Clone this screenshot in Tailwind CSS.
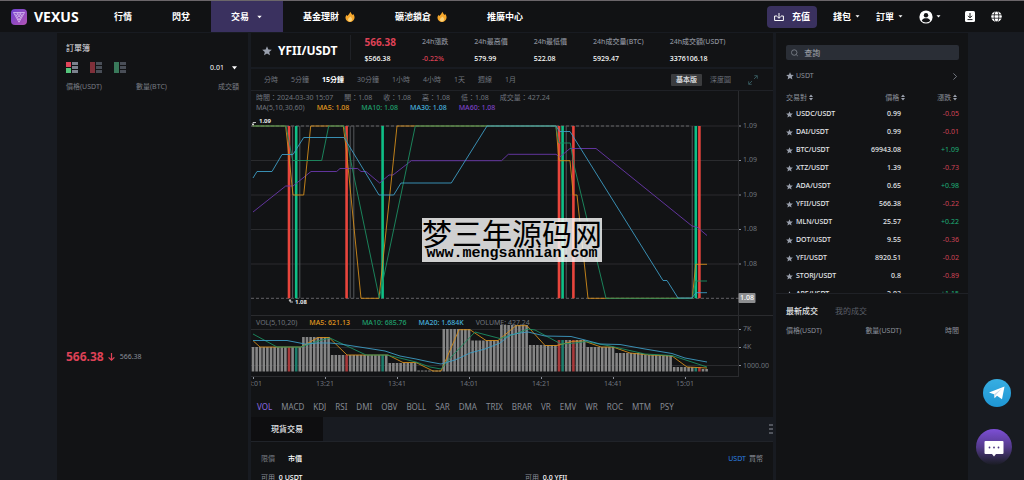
<!DOCTYPE html>
<html lang="zh-Hant">
<head>
  <meta charset="UTF-8">
  <meta name="viewport" content="width=device-width, initial-scale=1.0">
  <title>VEXUS - YFII/USDT</title>
  <script src="https://cdn.jsdelivr.net/npm/@tailwindcss/browser@4"></script>
</head>
<body class="flex h-screen flex-col overflow-hidden bg-[#181b21] font-['Noto_Sans','Noto_Sans_CJK_TC',sans-serif] text-[7px] leading-[10px] text-[#8a8f99]">

  <!-- Header -->
  <header class="flex h-8 shrink-0 items-stretch border-t border-[#6b666a] bg-[#111214] pl-[11px] text-[9px] font-bold text-white">
    <a href="#" class="flex w-[83px] items-center gap-[7px]">
      <svg class="size-4" viewBox="0 0 16 16">
        <defs>
          <linearGradient id="logoFill" x1="0" y1="0" x2="1" y2="1">
            <stop offset="0" stop-color="#6a3fd0"/>
            <stop offset="1" stop-color="#b455b4"/>
          </linearGradient>
        </defs>
        <rect width="16" height="16" rx="4" fill="url(#logoFill)"/>
        <path d="M2.500 3.500h3.200L8 8l2.300-4.500h3.200L8 13.200z M4.500 4.800L8 11l3.500-6.200 M5.800 3.500h4.400 M6.500 5h3" fill="none" stroke="#e6d4fa" stroke-width=".7"/>
      </svg>
      <span class="text-sm">VEXUS</span>
    </a>
    <nav class="flex items-stretch">
      <a href="#" class="flex items-center px-5">行情</a>
      <a href="#" class="flex items-center pr-[21px] pl-5">閃兌</a>
      <a href="#" class="flex items-center gap-[7px] bg-[#3a315f] px-5">交易
        <svg class="w-[7px]" viewBox="0 0 7 4"><path d="M1.300 .8h4.400L3.500 3.200z" fill="#fff"/></svg>
      </a>
      <a href="#" class="flex items-center gap-1.5 px-5">基金理財
        <svg class="w-2.5" viewBox="0 0 10 12"><path d="M5.600.8c.3 1.600 1 2 2 3.100l.6-.9C9.300 4.300 9.700 5.500 9.500 7 9.200 9.300 7.400 11 5 11S.6 9.300.5 7C.4 5.700 1 4.700 1.600 4l.8 1C3.600 3.900 4.300 2.700 5.600.8z" fill="#f6a72c"/><path d="M5.200 5.500C6.500 6.700 7.300 7.400 7 8.700 6.800 9.800 6 10.500 5 10.500S3.100 9.800 3 8.700c-.1-1.300 1.300-1.800 2.200-3.200z" fill="#fbd27a"/></svg>
      </a>
      <a href="#" class="flex items-center gap-1.5 px-5">礦池鎖倉
        <svg class="w-2.5" viewBox="0 0 10 12"><path d="M5.600.8c.3 1.600 1 2 2 3.100l.6-.9C9.300 4.300 9.700 5.500 9.500 7 9.200 9.300 7.400 11 5 11S.6 9.300.5 7C.4 5.700 1 4.700 1.600 4l.8 1C3.600 3.900 4.300 2.700 5.600.8z" fill="#f6a72c"/><path d="M5.200 5.500C6.500 6.700 7.300 7.400 7 8.700 6.800 9.800 6 10.500 5 10.500S3.100 9.800 3 8.700c-.1-1.300 1.300-1.800 2.200-3.200z" fill="#fbd27a"/></svg>
      </a>
      <a href="#" class="flex items-center px-5">推廣中心</a>
    </nav>
    <div class="ml-auto flex items-center pr-[22px]">
      <button class="mr-4 flex h-[22px] items-center gap-2 rounded-sm bg-[#3a315f] px-[7px]">
        <svg class="size-2.5" viewBox="0 0 10 10" fill="none" stroke="#fff"><path d="M3 4H.6v4.500h8.800V4H7M5 1v5M3.200 4.600L5 6.300l1.800-1.700"/></svg>
        <span>充值</span>
      </button>
      <a href="#" class="mr-4 flex items-center gap-1">錢包
        <svg class="w-[5px]" viewBox="0 0 5 3"><path d="M.5.300h4L2.500 2.600z" fill="#fff"/></svg>
      </a>
      <a href="#" class="mr-4 flex items-center gap-1">訂單
        <svg class="w-[5px]" viewBox="0 0 5 3"><path d="M.5.300h4L2.500 2.600z" fill="#fff"/></svg>
      </a>
      <button class="mr-6 flex items-center gap-[3px]" aria-label="帳戶">
        <svg class="size-3.5" viewBox="0 0 14 14"><circle cx="7" cy="7" r="6.600" fill="#fff"/><circle cx="7" cy="5.200" r="2.200" fill="#111214"/><path d="M2.800 10.800C3.500 8.900 5 8.300 7 8.300s3.500.6 4.200 2.500C10.200 12 8.700 12.500 7 12.500s-3.200-.5-4.200-1.700z" fill="#111214"/></svg>
        <svg class="w-[5px]" viewBox="0 0 5 3"><path d="M.5.300h4L2.500 2.600z" fill="#fff"/></svg>
      </button>
      <button class="mr-4" aria-label="下載">
        <svg class="h-[11px] w-2.5" viewBox="0 0 10 11"><rect width="10" height="11" rx="1.500" fill="#fff"/><path d="M5 2v4.600M3 4.800l2 2 2-2M2.500 8.600h5" fill="none" stroke="#111214"/></svg>
      </button>
      <button aria-label="語言">
        <svg class="size-[11px]" viewBox="0 0 11 11"><circle cx="5.500" cy="5.500" r="5.300" fill="#fff"/><g fill="none" stroke="#111214" stroke-width=".8"><ellipse cx="5.500" cy="5.500" rx="2.300" ry="5.300"/><path d="M0 3.800h11M0 7.200h11"/></g></svg>
      </button>
    </div>
  </header>

  <main class="flex min-h-0 flex-1 gap-[3px] pt-px pr-14 pl-[57px]">

    <!-- Order book -->
    <aside class="w-[191px] shrink-0 bg-[#121315] px-[9px] pt-2.5">
      <h2 class="text-[8px] text-[#e4e6ea]">訂單簿</h2>
      <div class="mt-[9px] flex items-center gap-3">
        <button aria-label="全部">
          <svg class="h-[11px] w-3" viewBox="0 0 12 11"><path d="M0 0h5v5H0z" fill="#e0455a"/><path d="M0 6h5v5H0z" fill="#55c57c"/><path d="M6 0h6v3H6zM6 4h6v3H6zM6 8h6v3H6z" fill="#7b818d"/></svg>
        </button>
        <button aria-label="賣盤">
          <svg class="h-[11px] w-3" viewBox="0 0 12 11"><path d="M0 0h5v11H0z" fill="#80303a"/><path d="M6 0h6v3H6zM6 4h6v3H6zM6 8h6v3H6z" fill="#494e57"/></svg>
        </button>
        <button aria-label="買盤">
          <svg class="h-[11px] w-3" viewBox="0 0 12 11"><path d="M0 0h5v11H0z" fill="#39795a"/><path d="M6 0h6v3H6zM6 4h6v3H6zM6 8h6v3H6z" fill="#494e57"/></svg>
        </button>
        <button class="ml-auto flex items-center gap-2 pr-0.5 text-white">0.01
          <svg class="w-[5px]" viewBox="0 0 5 4"><path d="M0 .3h5L2.500 3.600z" fill="#fff"/></svg>
        </button>
      </div>
      <div class="mt-[9px] grid grid-cols-[70px_1fr_auto] text-[#777b82]">
        <span>價格(USDT)</span>
        <span>數量(BTC)</span>
        <span>成交額</span>
      </div>
      <div class="h-[257px]"></div>
      <div class="flex items-center gap-1 leading-4">
        <span class="text-xs font-bold text-[#de4156]">566.38</span>
        <svg class="h-2 w-[7px]" viewBox="0 0 7 8"><path d="M3.500 0v7M.6 4.300l2.900 2.900 2.900-2.900" fill="none" stroke="#de4156" stroke-width="1.200"/></svg>
        <span class="pl-px">566.38</span>
      </div>
    </aside>

    <!-- Market and chart -->
    <section class="flex min-w-0 flex-1 flex-col">
      <div class="flex h-[34px] shrink-0 items-start bg-[#121315] pl-[11px]">
        <div class="mt-0.5 flex h-[25px] items-center gap-1.5 border-r border-[#1f2126] pt-1.5 pr-[13px]">
          <svg class="size-2.5" viewBox="0 0 10 10"><path d="M5 .3l1.400 3.100 3.400.3-2.600 2.200.8 3.400L5 7.500 2 9.300l.8-3.400L.2 3.700l3.400-.3z" fill="#9aa0ad"/></svg>
          <h1 class="text-xs font-bold text-white">YFII/USDT</h1>
        </div>
        <dl class="ml-[13px] flex gap-[26px] pt-1 font-medium">
          <div>
            <dt class="text-[10px] font-bold text-[#de4156]">566.38</dt>
            <dd class="mt-[7px] text-white">$566.38</dd>
          </div>
          <div>
            <dt>24h漲跌</dt>
            <dd class="mt-[7px] text-[#de4156]">-0.22%</dd>
          </div>
          <div>
            <dt>24h最高價</dt>
            <dd class="mt-[7px] text-white">579.99</dd>
          </div>
          <div>
            <dt>24h最低價</dt>
            <dd class="mt-[7px] text-white">522.08</dd>
          </div>
          <div>
            <dt>24h成交量(BTC)</dt>
            <dd class="mt-[7px] text-white">5929.47</dd>
          </div>
          <div>
            <dt>24h成交額(USDT)</dt>
            <dd class="mt-[7px] text-white">3376106.18</dd>
          </div>
        </dl>
      </div>

      <div class="mt-0.5 flex h-[22px] shrink-0 items-center gap-[13px] border-b border-[#1f2126] bg-[#121315] pr-[15px] pl-[13px] text-[#6f747d]">
        <button>分時</button>
        <button>5分鐘</button>
        <button class="font-bold text-white">15分鐘</button>
        <button>30分鐘</button>
        <button>1小時</button>
        <button>4小時</button>
        <button>1天</button>
        <button>週線</button>
        <button>1月</button>
        <div class="ml-auto flex items-center gap-2">
          <button class="h-3 rounded-[1px] bg-[#3b3c3e] px-[5px] font-bold text-[#d5d7da]">基本版</button>
          <button>深度圖</button>
        </div>
        <button class="ml-1" aria-label="全螢幕">
          <svg class="size-2.5" viewBox="0 0 10 10" fill="none" stroke="#35565b"><path d="M6.300 .7h3v3M9.200.8L6 4M3.700 9.300h-3v-3M.8 9.200L4 6"/></svg>
        </button>
      </div>

      <div class="relative bg-[#121315]">
        <svg id="chart" class="block w-full" viewBox="251 91 522 302" font-family="'Noto Sans', sans-serif" font-size="7">
          <g stroke="#2a2b2e">
            <path d="M251 126h488M251 160.500h488M251 195h488M251 229.500h488M251 264h488"/>
            <path d="M251 315.500h522M251 329.500h488M251 347.500h488M251 365.500h488M251 376.500h488M738.500 91v285"/>
          </g>
          <path d="M251 298.300h488M251 126h440" stroke="#77797c" stroke-dasharray="3 2" stroke-width=".8"/>
          <path d="M739 126h2M739 160.500h2M739 195h2M739 229.500h2M739 264h2M739 329.500h2M739 347.500h2M739 365.500h2M253.500 377v2M325.500 377v2M397.500 377v2M469.500 377v2M541.500 377v2M613.500 377v2M685.500 377v2" stroke="#8a8f99"/>
          <g id="candles"></g>
          <g id="volumes"></g>
          <g fill="none" stroke-width=".9">
            <polyline stroke="#6a38ac" points="253,212 285.700,186 293,186 311,171.500 336.700,171.500 340,168.500 357.700,168.500 361,171.500 366,171.500 379.700,183 389,175 393,175 411.300,160.700 501.500,160.700 508.300,154.300 556,154.300 559.700,157 570,148.500 596,148.500 692,226 697,227 707,235.500"/>
            <polyline stroke="#d28c1b" points="252.700,126 285.700,126 293,195 303.700,195 310.700,126 343.300,126 346.600,152 361,298.300 379,298.300 397,126 556,126 559,160.700 570,160.700 573.300,195 577,195 588,298.300 692.300,298.300 695.700,264.300 707,264.300"/>
            <polyline stroke="#1c8f62" points="252.700,126 286,126 292.700,160.500 321.700,160.500 328.700,126 344,126 352,167 379.300,298.300 415.300,126 555.700,126 559,143 570.300,143 574,165 606,298.300 692.300,298.300 695.700,281 707,281"/>
            <polyline stroke="#3d9cc4" points="253,178 257,171.500 272,171.500 282,154.500 293,154.500 303.700,137.500 344,137.500 379,195 393.700,195 401,183 451.300,183 487,126 556,126 559.700,131.500 570,131.500 663,280.500 667,280.500 678,298 692,298 696,292.700 707,292.700"/>
            <polyline stroke="#d28c1b" points="253.300,341 260,347 301,347 318,337.500 329,337.500 347,355 388,355 403,362.500 416,362.500 433,371 441,371 459,329.700 470,329.700 486,340.500 498,340.500 516,325.700 527,325.700 545,345.500 557,345.500 573,341.300 584,341 601,347 613,347 630,353 650,355 672,356 687,367 707,368"/>
            <polyline stroke="#1c8f62" points="253,334 277,347 301,347 318,341 330,338 366,355 387,355 404,359 416,362 430,367 441,369 453,355 475,332 500,338.500 515,334 528,329 535,330 561,344 575,343 586,341.500 610,346 645,354 672,355.500 707,367"/>
            <polyline stroke="#3d9cc4" points="253,340.500 287,340.500 305,344 318,343 330,343 340,344 366,348 385,351 400,356 416,359 430,362 441,364 455,360 470,353 485,349 500,343 510,335 520,333 528,332 545,336 571,336.500 585,340 600,344 620,344.500 645,349 672,353.500 685,358 707,362"/>
          </g>
          <g fill="none" stroke="#e8e8e8" stroke-width=".8">
            <path d="M253 125v-2.500h3M252 123.800l1 1.400 1-1.400"/>
            <path d="M290 299.500v2.500h3M289 301l1-1.400 1 1.400"/>
          </g>
          <g fill="#e8e8e8" font-weight="bold" font-size="6">
            <text x="259" y="123">1.09</text>
            <text x="295" y="304">1.08</text>
          </g>
          <g fill="#6f747d">
            <text x="743" y="128">1.09</text>
            <text x="743" y="162">1.09</text>
            <text x="743" y="197">1.09</text>
            <text x="743" y="231">1.08</text>
            <text x="743" y="266">1.08</text>
            <text x="743" y="331">7K</text>
            <text x="743" y="349">4K</text>
            <text x="743" y="368">1000.00</text>
          </g>
          <rect x="738.500" y="293" width="17" height="10" rx="1" fill="#8d8e90"/>
          <text x="740" y="300" fill="#fff" font-weight="500">1.08</text>
          <g fill="#6f747d" text-anchor="middle">
            <text x="253" y="386">13:01</text>
            <text x="325" y="386">13:21</text>
            <text x="397" y="386">13:41</text>
            <text x="469" y="386">14:01</text>
            <text x="541" y="386">14:21</text>
            <text x="613" y="386">14:41</text>
            <text x="685" y="386">15:01</text>
          </g>
        </svg>

        <!-- Legends over the two panes -->
        <div class="absolute top-0.5 left-[5px] text-[#6f747d]">
          <div class="flex gap-[11px]">
            <span>時間：2024-03-30 15:07</span>
            <span>開：1.08</span>
            <span>收：1.08</span>
            <span>高：1.08</span>
            <span>低：1.08</span>
            <span>成交量：427.24</span>
          </div>
          <div class="flex gap-3 font-medium">
            <span class="font-normal">MA(5,10,30,60)</span>
            <span class="text-[#e0981f]">MA5: 1.08</span>
            <span class="text-[#1fa06d]">MA10: 1.08</span>
            <span class="text-[#47b0dc]">MA30: 1.08</span>
            <span class="text-[#7a41c4]">MA60: 1.08</span>
          </div>
        </div>
        <div class="absolute top-[227px] left-[5px] flex gap-3 font-medium text-[#6f747d]">
          <span class="font-normal">VOL(5,10,20)</span>
          <span class="text-[#e0981f]">MA5: 621.13</span>
          <span class="text-[#1fa06d]">MA10: 685.76</span>
          <span class="text-[#47b0dc]">MA20: 1.684K</span>
          <span class="font-normal">VOLUME: 427.24</span>
        </div>

        <!-- Watermark -->
        <div class="absolute top-[127px] left-[171px] flex h-11 w-[180px] flex-col items-center bg-white/80 text-black">
          <span class="font-['Noto_Sans_CJK_SC',sans-serif] text-3xl leading-7 whitespace-nowrap" lang="zh-Hans">梦三年源码网</span>
          <span class="font-['Liberation_Mono',monospace] text-[15px] leading-4 font-bold">www.mengsannian.com</span>
        </div>
      </div>

      <div class="flex h-6 shrink-0 items-center gap-[9px] bg-[#121315] px-1.5 pt-1 text-[8px] text-[#858a93]">
        <button class="text-[#8b6be0]">VOL</button>
        <button>MACD</button>
        <button>KDJ</button>
        <button>RSI</button>
        <button>DMI</button>
        <button>OBV</button>
        <button>BOLL</button>
        <button>SAR</button>
        <button>DMA</button>
        <button>TRIX</button>
        <button>BRAR</button>
        <button>VR</button>
        <button>EMV</button>
        <button>WR</button>
        <button>ROC</button>
        <button>MTM</button>
        <button>PSY</button>
      </div>

      <!-- Order form -->
      <div class="flex h-[25px] shrink-0 items-center justify-between border-b border-[#202329]">
        <button class="h-full w-[72px] bg-[#0e0e10] text-[8px] font-medium text-[#e4e6ea]">現貨交易</button>
        <button aria-label="更多">
          <svg class="h-2.5 w-1" viewBox="0 0 4 10"><path d="M0 1h4M0 5h4M0 9h4" stroke="#8a8f99"/></svg>
        </button>
      </div>
      <form class="min-h-0 flex-1 bg-[#121315] px-2.5 pt-3">
        <div class="flex gap-[13px]">
          <button type="button" class="text-[#777b82]">限價</button>
          <button type="button" class="font-medium text-white">市價</button>
          <span class="ml-auto flex gap-[3px]">
            <a href="#" class="text-[#2b7fe0]">USDT</a>
            <a href="#">買幣</a>
          </span>
        </div>
        <div class="mt-[9px] grid grid-cols-[264px_1fr]">
          <p>可用 <b class="pl-0.5 font-medium text-white">0 USDT</b></p>
          <p>可用 <b class="pl-0.5 font-medium text-white">0.0 YFII</b></p>
        </div>
      </form>
    </section>

    <!-- Pairs and trades -->
    <aside class="w-48 shrink-0 bg-[#121315]">
      <div class="h-[261px] overflow-hidden border-b border-[#1f2126] pt-3 pr-[9px] pl-2.5">
        <label class="flex h-[15px] items-center gap-1.5 rounded-[2px] bg-[#2a2e36] px-[5px]">
          <svg class="size-2" viewBox="0 0 8 8" fill="none" stroke="#8a8f99" stroke-width=".8"><circle cx="3.500" cy="3.500" r="3"/><path d="M5.700 5.700L7.800 7.800"/></svg>
          <input type="text" aria-label="查詢" placeholder="查詢" class="w-full text-[8px] outline-none placeholder:text-[#a0a5ae]">
        </label>
        <button class="mt-[11px] flex w-full items-center gap-0.5">
          <svg class="size-2" viewBox="0 0 10 10"><path d="M5 .3l1.400 3.100 3.400.3-2.600 2.200.8 3.400L5 7.500 2 9.300l.8-3.400L.2 3.700l3.400-.3z" fill="#9aa0ad"/></svg>
          <span>USDT</span>
          <svg class="mr-0.5 ml-auto h-[7px] w-1" viewBox="0 0 4 7"><path d="M.4.400l3.200 3.100L.4 6.600" fill="none" stroke="#8a8f99" stroke-width=".8"/></svg>
        </button>
        <table class="mt-2.5 w-full table-fixed">
          <thead>
            <tr class="h-3.5">
              <th class="w-[68px] text-left font-normal">交易對 <svg class="inline h-[7px] w-1 align-[-1px]" viewBox="0 0 4 7"><path d="M0 3l2-2.600L4 3zM0 4l2 2.600L4 4z" fill="#9aa0ad"/></svg></th>
              <th class="text-right font-normal"><span class="-mr-1">價格 <svg class="inline h-[7px] w-1 align-[-1px]" viewBox="0 0 4 7"><path d="M0 3l2-2.600L4 3zM0 4l2 2.600L4 4z" fill="#9aa0ad"/></svg></span></th>
              <th class="w-[58px] pr-0.5 text-right font-normal">漲跌 <svg class="inline h-[7px] w-1 align-[-1px]" viewBox="0 0 4 7"><path d="M0 3l2-2.600L4 3zM0 4l2 2.600L4 4z" fill="#9aa0ad"/></svg></th>
            </tr>
          </thead>
          <tbody id="pairs"></tbody>
        </table>
      </div>
      <div class="pt-3 pr-[9px] pl-2.5">
        <div class="flex gap-[17px] text-[8px]">
          <button class="font-medium text-[#e4e6ea]">最新成交</button>
          <button class="text-[#5a5f68]">我的成交</button>
        </div>
        <div class="mt-2.5 grid grid-cols-3">
          <span>價格(USDT)</span>
          <span class="text-right">數量(USDT)</span>
          <span class="text-right">時間</span>
        </div>
      </div>
    </aside>
  </main>

  <!-- Floating contact buttons -->
  <div class="fixed right-3 bottom-[15px] flex flex-col items-end gap-[22px]">
    <a href="#" aria-label="Telegram" class="mr-px flex size-7 items-center justify-center rounded-full bg-linear-to-b from-[#37aee2] to-[#1e96d4]">
      <svg class="h-3.5 w-4" viewBox="0 0 16 14"><path d="M0 6.500L15.500.5 13 13.300 8 9.800 5.600 12.300 5 8.200z" fill="#fff"/><path d="M5 8.200L13 2.600 6.500 9.200 5.600 12.300z" fill="#c8daea"/></svg>
    </a>
    <button aria-label="客服" class="flex size-9 items-center justify-center rounded-full bg-linear-to-b from-[#7d4fd6] via-[#543a8c] to-[#1a1c24]">
      <svg class="mt-1 h-4 w-5" viewBox="0 0 20 16"><path d="M1.500 0h17Q19.500 0 19.500 1v11q0 1-1 1H12l-2 2.500L8 13H1.500q-1 0-1-1V1q0-1 1-1z" fill="#fff"/><g fill="#4a3480"><circle cx="5.500" cy="6.500" r=".9"/><circle cx="10" cy="6.500" r=".9"/><circle cx="14.500" cy="6.500" r=".9"/></g></svg>
    </button>
  </div>

  <script>
    const RED = '#e8453c';
    const GREEN = '#0fbf86';
    const GRAY = '#55575a';
    const FIRST_X = 253;
    const STEP = 3.6;

    // Candle index -> colour; candles with no entry are flat
    const candles = {
      10: RED, 11: GRAY, 12: GREEN, 13: GRAY,
      26: RED, 27: GRAY, 28: GRAY, 36: GREEN,
      85: RED, 86: GREEN, 87: GRAY, 89: RED,
      122: GRAY, 123: GREEN, 124: RED
    };

    // [last index, top of the bars up to it]
    const volumeSteps = [
      [13, 347], [21, 337], [37, 355], [45, 363], [52, 370.5], [60, 329], [68, 340.5], [76, 325],
      [84, 345], [92, 340], [100, 347], [108, 353], [116, 355], [124, 367], [126, 369]
    ];
    const VOLUME_BASE = 371.5;

    function rect(x, y, width, height, fill) {
      return `<rect x="${x}" y="${y}" width="${width}" height="${height}" fill="${fill}"/>`;
    }

    let candleMarkup = '';
    for (const [i, color] of Object.entries(candles)) {
      const width = color === GRAY ? 1 : 2.6;
      candleMarkup += rect(FIRST_X + i * STEP - width / 2, 126, width, 172.3, color);
    }
    document.getElementById('candles').innerHTML = candleMarkup;

    let volumeMarkup = '';
    let index = 0;
    volumeSteps.forEach(([last, top]) => {
      for (; index <= last; index++) {
        let fill = '#858585';
        if (candles[index] === RED) fill = '#a8393a';
        if (candles[index] === GREEN) fill = '#1c7d6b';
        volumeMarkup += rect(FIRST_X + index * STEP - 1.3, top, 2.6, VOLUME_BASE - top, fill);
      }
    });
    document.getElementById('volumes').innerHTML = volumeMarkup;

    const pairs = [
      ['USDC', '0.99', '-0.05'],
      ['DAI', '0.99', '-0.01'],
      ['BTC', '69943.08', '+1.09'],
      ['XTZ', '1.39', '-0.73'],
      ['ADA', '0.65', '+0.98'],
      ['YFII', '566.38', '-0.22'],
      ['MLN', '25.57', '+0.22'],
      ['DOT', '9.55', '-0.36'],
      ['YFI', '8920.51', '-0.02'],
      ['STORJ', '0.8', '-0.89'],
      ['APE', '2.03', '+1.15']
    ];

    document.getElementById('pairs').innerHTML = pairs.map(([name, price, change]) => `
      <tr class="h-[18px] text-[#e4e6ea]">
        <td class="font-medium"><span class="flex items-center gap-[3px]">
          <svg class="size-[7px]" viewBox="0 0 10 10"><path d="M5 .3l1.400 3.100 3.400.3-2.600 2.200.8 3.400L5 7.500 2 9.300l.8-3.400L.2 3.700l3.400-.3z" fill="#9aa0ad"/></svg>
          ${name}/USDT</span></td>
        <td class="text-right font-medium">${price}</td>
        <td class="text-right ${change[0] === '+' ? 'text-[#1fb078]' : 'text-[#d04455]'}">${change}</td>
      </tr>`).join('');
  </script>

</body>
</html>
